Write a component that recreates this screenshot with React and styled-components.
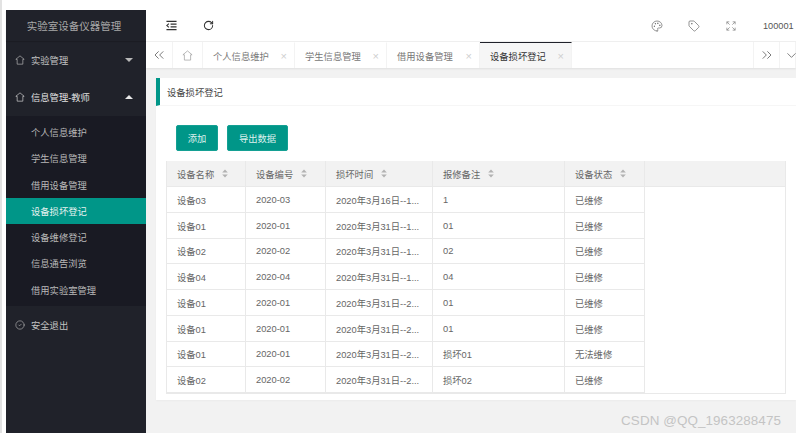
import { createGlobalStyle } from "styled-components";
import styled from "styled-components";
import {
  ChevronDown,
  ChevronsLeft,
  ChevronsRight,
  CircleCheck,
  Palette,
  RotateCw,
  Tag,
} from "lucide-react";

const GlobalStyle = createGlobalStyle`
  html, body {
    margin: 0;
    padding: 0;
    background: #fff;
    overflow: hidden;
  }
  * {
    box-sizing: border-box;
  }
  body {
    font-family: "Liberation Sans", "Noto Sans CJK SC", sans-serif;
    font-size: 9.3px;
    color: #666;
  }
`;

const columns = "79px 80px 107px 132px 80px 141px";

const rows = [
  ["设备03", "2020-03", "2020年3月16日--1...", "1", "已维修"],
  ["设备01", "2020-01", "2020年3月31日--1...", "01", "已维修"],
  ["设备02", "2020-02", "2020年3月31日--1...", "02", "已维修"],
  ["设备04", "2020-04", "2020年3月31日--1...", "04", "已维修"],
  ["设备01", "2020-01", "2020年3月31日--2...", "01", "已维修"],
  ["设备01", "2020-01", "2020年3月31日--2...", "01", "已维修"],
  ["设备01", "2020-01", "2020年3月31日--2...", "损坏01", "无法维修"],
  ["设备02", "2020-02", "2020年3月31日--2...", "损坏02", "已维修"],
];

const subItems = ["个人信息维护", "学生信息管理", "借用设备管理", "设备损坏登记", "设备维修登记", "信息通告浏览", "借用实验室管理"];
const tabs = ["个人信息维护", "学生信息管理", "借用设备管理", "设备损坏登记"];
const headers = ["设备名称", "设备编号", "损坏时间", "报修备注", "设备状态"];

function HomeIcon({ size = 10 }) {
  return (
    <svg width={size} height={size} viewBox="0 0 12 12" fill="none" stroke="currentColor" strokeWidth="0.75">
      <path d="M6 1 L11 5.2 H9.4 V11 H2.6 V5.2 H1 Z" strokeLinejoin="round" />
    </svg>
  );
}

function ShrinkIcon() {
  return (
    <svg width="11" height="11" viewBox="0 0 12 12" fill="none" stroke="#333" strokeWidth="1.2">
      <path d="M0.5 1.5 H11.5 M5 4.5 H11.5 M5 7.5 H11.5 M0.5 10.5 H11.5" />
      <path d="M3.2 4 L0.8 6 L3.2 8" />
    </svg>
  );
}

function FullscreenIcon() {
  return (
    <svg width="10" height="10" viewBox="0 0 12 12" fill="none" stroke="#888" strokeWidth="0.9">
      <path d="M1 4 V1 H4 M1 1 L4.4 4.4 M8 1 H11 V4 M11 1 L7.6 4.4 M11 8 V11 H8 M11 11 L7.6 7.6 M4 11 H1 V8 M1 11 L4.4 7.6" />
    </svg>
  );
}

function SortIcon() {
  return (
    <svg width="6" height="9" viewBox="0 0 6 9" fill="#b2b2b2">
      <path d="M3 0.5 L5.8 3.6 H0.2 Z M3 8.5 L0.2 5.4 H5.8 Z" />
    </svg>
  );
}

const Page = styled.div`
  display: flex;
  width: 796px;
  height: 433px;
  overflow: hidden;
  background: #fff;
  border-left: 2px solid #e2e2e2;
  position: relative;
`;

const Sidebar = styled.aside`
  flex: none;
  width: 140px;
  margin: 10px 0 0 4px;
  background: #20222a;
  color: #c2c2c2;
`;

const Logo = styled.div`
  height: 31px;
  display: flex;
  align-items: center;
  justify-content: center;
  padding-right: 4px;
  font-size: 10.5px;
  color: #a8a8a8;
  box-shadow: 0 1px 1px rgba(0, 0, 0, 0.15);
`;

const MenuItem = styled.div`
  height: 37.4px;
  display: flex;
  align-items: center;
  padding: 0 13px 0 9px;
  gap: 6px;
  color: ${(p) => (p.$open ? "#e2e2e2" : "#c2c2c2")};
`;

const MenuText = styled.span`
  flex: 1;
`;

const Caret = styled.span`
  width: 0;
  height: 0;
  border-left: 4px solid transparent;
  border-right: 4px solid transparent;
  ${(p) => (p.$up ? "border-bottom: 4px solid #e8e8e8;" : "border-top: 4px solid #b8b8b8;")}
`;

const SubMenu = styled.div`
  background: #191a23;
  padding: 3px 0;
`;

const SubItem = styled.div`
  height: 26.3px;
  display: flex;
  align-items: center;
  padding-left: 25px;
  color: ${(p) => (p.$active ? "#e6f2f0" : "#b8b8b8")};
  background: ${(p) => (p.$active ? "#009688" : "transparent")};
`;

const Main = styled.main`
  flex: 1;
  min-width: 0;
  display: flex;
  flex-direction: column;
  background: #f2f2f2;
`;

const TopBar = styled.header`
  height: 42px;
  flex: none;
  display: flex;
  align-items: center;
  padding: 10px 0 0 20px;
  background: #fff;
  border-bottom: 1px solid #f0f0f0;
`;

const TopIcon = styled.span`
  width: ${(p) => p.$w || 37}px;
  display: flex;
  align-items: center;
  justify-content: ${(p) => (p.$left ? "flex-start" : "center")};
  color: #666;
`;

const Spacer = styled.div`
  flex: 1;
`;

const UserName = styled.span`
  width: 33px;
  margin-left: 14px;
  color: #555;
  font-size: 9.2px;
  white-space: nowrap;
`;

const TabBar = styled.nav`
  height: 26px;
  flex: none;
  display: flex;
  background: #fff;
  box-shadow: 0 1px 2px rgba(0, 0, 0, 0.08);
  position: relative;
`;

const TabButton = styled.div`
  flex: none;
  width: ${(p) => p.$w}px;
  display: flex;
  align-items: center;
  justify-content: center;
  border-right: 1px solid #f3f3f3;
  border-left: ${(p) => (p.$edge ? "1px solid #f3f3f3" : "none")};
  color: ${(p) => p.$color || "#666"};
`;

const Tab = styled.div`
  flex: none;
  width: ${(p) => p.$w}px;
  display: flex;
  align-items: center;
  justify-content: space-between;
  padding: 0 7px 0 10px;
  border-right: 1px solid #f3f3f3;
  color: ${(p) => (p.$active ? "#333" : "#777")};
  background: ${(p) => (p.$active ? "#f6f6f6" : "#fff")};
  border-top: 1px solid ${(p) => (p.$active ? "#20222a" : "transparent")};
`;

const Close = styled.span`
  color: #cfcfcf;
  font-size: 11px;
`;

const Card = styled.section`
  margin: 10px 0 0 10px;
  height: 322px;
  background: #fff;
  box-shadow: 0 1px 2px rgba(0, 0, 0, 0.03);
`;

const CardTitle = styled.div`
  height: 28px;
  display: flex;
  align-items: center;
  padding-left: 7px;
  border-left: 4px solid #009688;
  border-bottom: 1px solid #f6f6f6;
  color: #444;
`;

const CardBody = styled.div`
  padding: 19px 10px 0;
`;

const Toolbar = styled.div`
  display: flex;
  gap: 9px;
  padding-left: 10px;
  margin-bottom: 10px;
`;

const Button = styled.button`
  height: 26px;
  width: ${(p) => p.$w}px;
  padding: 0;
  border: 1px solid #14a093;
  border-radius: 2px;
  background: #009688;
  color: #dff1ee;
  font: inherit;
`;

const Table = styled.div`
  width: 620px;
  border: 1px solid #e9e9e9;
  border-top: none;
`;

const Row = styled.div`
  display: grid;
  grid-template-columns: ${columns};
  height: ${(p) => (p.$head ? "26px" : "25.75px")};
  background: ${(p) => (p.$head ? "#f2f2f2" : "transparent")};
`;

const Cell = styled.div`
  display: flex;
  align-items: center;
  gap: 8px;
  padding: ${(p) => (p.$body ? "1px 0 0 10px" : "0 0 0 10px")};
  min-width: 0;
  white-space: nowrap;
  overflow: hidden;
  border-right: 1px solid #e9e9e9;
  border-bottom: 1px solid #e9e9e9;
  color: #666;
`;

const FillCell = styled.div`
  border-bottom: 1px solid #e9e9e9;
`;

const Watermark = styled.div`
  position: absolute;
  right: 15px;
  bottom: 5px;
  font-size: 13.4px;
  color: #c4c4c4;
  letter-spacing: 0.1px;
  white-space: nowrap;
`;

export default function App() {
  return (
    <Page>
      <GlobalStyle />
      <Sidebar>
        <Logo>实验室设备仪器管理</Logo>
        <MenuItem>
          <HomeIcon />
          <MenuText>实验管理</MenuText>
          <Caret />
        </MenuItem>
        <MenuItem $open>
          <HomeIcon />
          <MenuText>信息管理-教师</MenuText>
          <Caret $up />
        </MenuItem>
        <SubMenu>
          {subItems.map((item) => (
            <SubItem key={item} $active={item === "设备损坏登记"}>
              {item}
            </SubItem>
          ))}
        </SubMenu>
        <MenuItem>
          <CircleCheck size={10} strokeWidth={1.4} />
          <MenuText>安全退出</MenuText>
        </MenuItem>
      </Sidebar>

      <Main>
        <TopBar>
          <TopIcon $w={37} $left>
            <ShrinkIcon />
          </TopIcon>
          <TopIcon $w={20} $left>
            <RotateCw size={11} strokeWidth={2.2} color="#333" />
          </TopIcon>
          <Spacer />
          <TopIcon>
            <Palette size={12} strokeWidth={1.4} />
          </TopIcon>
          <TopIcon>
            <Tag size={12} strokeWidth={1.4} />
          </TopIcon>
          <TopIcon>
            <FullscreenIcon />
          </TopIcon>
          <UserName>100001</UserName>
        </TopBar>

        <TabBar>
          <TabButton $w={27}>
            <ChevronsLeft size={16} strokeWidth={1.3} />
          </TabButton>
          <TabButton $w={30} $color="#999">
            <HomeIcon size={11} />
          </TabButton>
          {tabs.map((tab, i) => (
            <Tab key={tab} $w={[92, 92, 93, 92][i]} $active={i === 3}>
              {tab}
              <Close>×</Close>
            </Tab>
          ))}
          <Spacer />
          <TabButton $w={27} $edge>
            <ChevronsRight size={16} strokeWidth={1.3} />
          </TabButton>
          <TabButton $w={16}>
            <ChevronDown size={15} strokeWidth={1.3} style={{ marginLeft: 8, flex: "none" }} />
          </TabButton>
        </TabBar>

        <Card>
          <CardTitle>设备损坏登记</CardTitle>
          <CardBody>
            <Toolbar>
              <Button $w={42}>添加</Button>
              <Button $w={61}>导出数据</Button>
            </Toolbar>
            <Table>
              <Row $head>
                {headers.map((h) => (
                  <Cell key={h}>
                    {h}
                    <SortIcon />
                  </Cell>
                ))}
                <FillCell />
              </Row>
              {rows.map((row, i) => (
                <Row key={i}>
                  {row.map((value, j) => (
                    <Cell key={j} $body>
                      {value}
                    </Cell>
                  ))}
                </Row>
              ))}
            </Table>
          </CardBody>
        </Card>
      </Main>
      <Watermark>CSDN @QQ_1963288475</Watermark>
    </Page>
  );
}
